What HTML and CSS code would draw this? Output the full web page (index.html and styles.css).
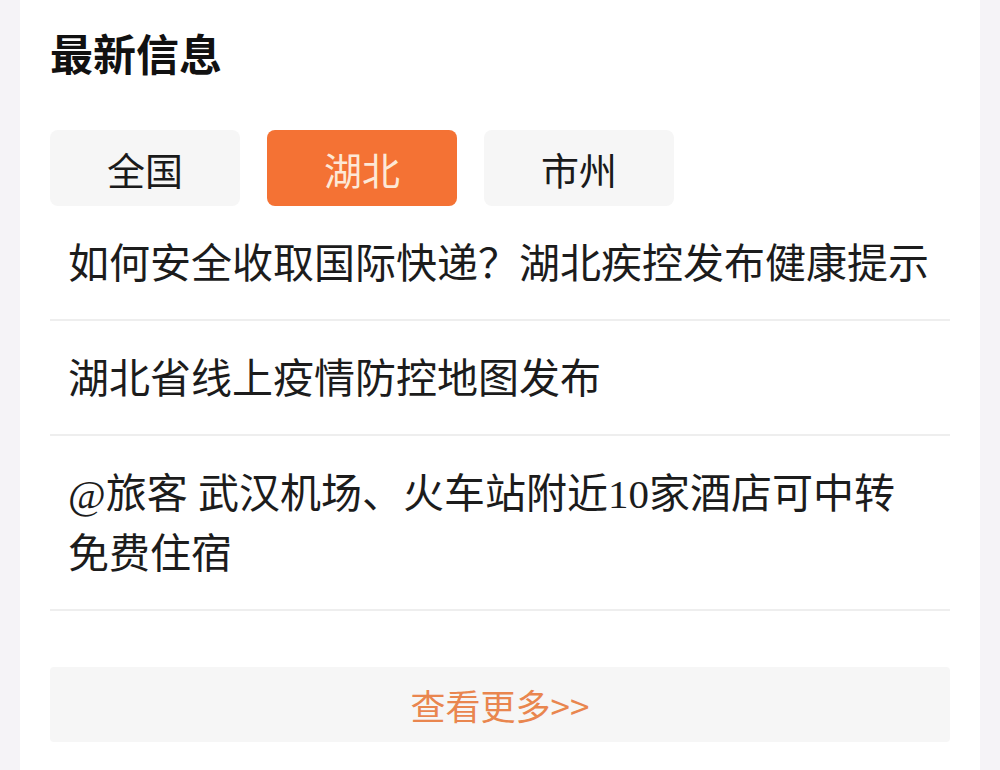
FILE: index.html
```html
<!DOCTYPE html>
<html lang="zh-CN">
<head>
<meta charset="utf-8">
<title>最新信息</title>
<link rel="stylesheet" href="styles.css">
</head>
<body>
<div class="card">
  <h1 class="title">最新信息</h1>
  <div class="tabs">
    <div class="tab">全国</div>
    <div class="tab active">湖北</div>
    <div class="tab">市州</div>
  </div>
  <ul class="news">
    <li class="item">如何安全收取国际快递？湖北疾控发布健康提示</li>
    <li class="item">湖北省线上疫情防控地图发布</li>
    <li class="item">@旅客 武汉机场、火车站附近10家酒店可中转免费住宿</li>
  </ul>
  <div class="more">查看更多&gt;&gt;</div>
</div>
</body>
</html>
```

FILE: styles.css
```css
html, body {
  margin: 0;
  padding: 0;
}
body {
  background: #f5f3f7;
  width: 1000px;
  height: 770px;
  overflow: hidden;
  font-family: "Liberation Serif", "Noto Sans CJK SC", serif;
  color: #1c1c1c;
}
.card {
  margin: 0 20px;
  height: 770px;
  background: #ffffff;
  padding: 22px 30px 0;
  box-sizing: border-box;
}
.title {
  margin: 0;
  font-family: "Noto Sans CJK SC", sans-serif;
  font-weight: 700;
  font-size: 43px;
  line-height: 60px;
  color: #111;
}
.tabs {
  display: flex;
  gap: 27px;
  margin-top: 48px;
}
.tab {
  width: 190px;
  height: 76px;
  border-radius: 8px;
  background: #f6f6f6;
  display: flex;
  align-items: center;
  justify-content: center;
  font-family: "Noto Sans CJK SC", sans-serif;
  font-size: 38px;
  color: #1a1a1a;
}
.tab.active {
  background: #f47234;
  color: #fde8d6;
}
.news {
  list-style: none;
  margin: 0;
  padding: 0;
}
.item {
  padding: 28px 18px 25px;
  font-size: 41px;
  line-height: 60px;
  border-bottom: 2px solid #eeeeee;
}
.more {
  margin-top: 56px;
  height: 75px;
  background: #f6f6f6;
  border-radius: 4px;
  display: flex;
  align-items: center;
  justify-content: center;
  font-family: "Noto Sans CJK SC", sans-serif;
  font-size: 35px;
  color: #e9864f;
}
```
